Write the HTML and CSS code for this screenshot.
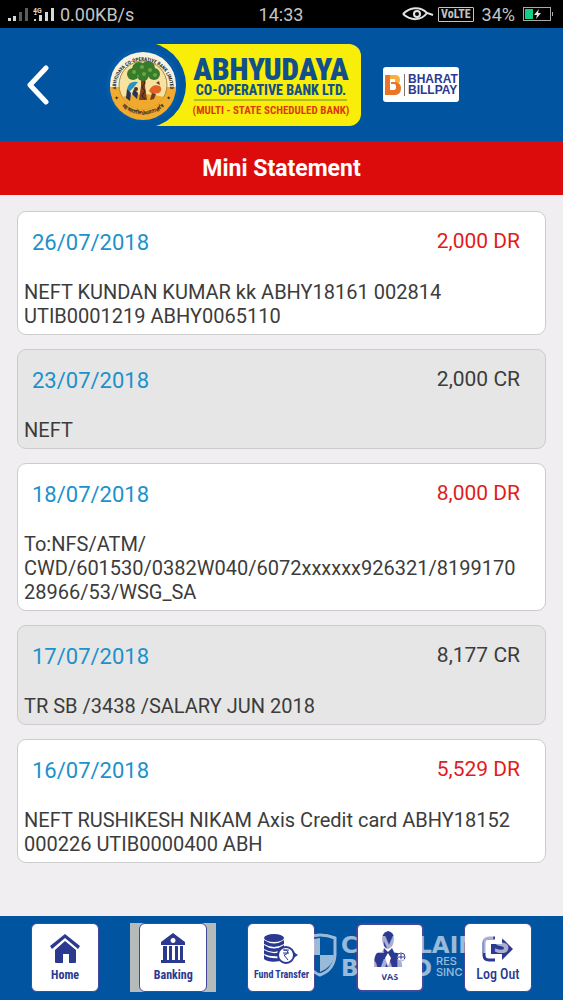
FILE: index.html
```html
<!DOCTYPE html>
<html lang="en">
<head>
    <meta charset="UTF-8">
    <meta name="viewport" content="width=device-width, initial-scale=1.0">
    <title>Mini Statement</title>
    <link rel="stylesheet" href="styles.css">
</head>
<body>
    <div class="app">
        <div class="status-bar">
            <div class="status-left">
                <svg class="signal" width="47" height="16" viewBox="0 0 47 16" aria-hidden="true">
                    <path d="M0 12h3v3H0zM5 10h3v5H5z" fill="#d8d8d8"/>
                    <path d="M11 6h3v9h-3zM17 2h3v13h-3z" fill="#5c5c5c"/>
                    <path d="M26 13h2v2h-2zM31 9h3v6h-3zM37 6h3v9h-3zM43 2h3v13h-3z" fill="#d8d8d8"/>
                    <path d="M26 9l1.500 -2 1.500 2z" fill="#d8d8d8"/>
                    <text x="25" y="7" class="net">4G</text>
                </svg>
                <span>0.00KB/s</span>
            </div>
            <span class="clock">14:33</span>
            <div class="status-right">
                <svg width="32" height="16" viewBox="0 0 32 16" fill="none" stroke="#e4e4e4" aria-hidden="true">
                    <path d="M1 8C8 1 18 0 25 7l6 2M1 8c8 7 18 7 24-1" stroke-width="2"/>
                    <circle cx="15" cy="8" r="3" stroke-width="2"/>
                </svg>
                <span class="volte">VoLTE</span>
                <span>34%</span>
                <svg width="31" height="14" viewBox="0 0 31 14" aria-hidden="true">
                    <rect x=".5" y=".5" width="27" height="13" fill="none" stroke="#aaa"/>
                    <path d="M2 2h8v10H2z" fill="#12cf86"/>
                    <path d="M29 5h1v4h-1z" fill="#aaa"/>
                    <path d="M16 2l-5 6h3l-1 4 5-6h-3z" fill="#e6e6e6"/>
                </svg>
            </div>
        </div>

        <header class="header">
            <button class="back" aria-label="Back">
                <svg width="24" height="40" viewBox="0 0 24 40"><path d="M20 3L4 20l16 17" fill="none" stroke="#fff" stroke-width="5" stroke-linecap="round" stroke-linejoin="round"/></svg>
            </button>

            <svg class="bank-logo" width="262" height="84" viewBox="0 0 262 84" role="img" aria-label="Abhyudaya Co-operative Bank Ltd.">
                <path d="M46 1h203a12 12 0 0 1 12 12v58a12 12 0 0 1-12 12H46z" fill="#f9ee0a"/>
                <circle cx="43" cy="42" r="43" fill="#0054a0"/>
                <circle cx="43" cy="42" r="37" fill="#045aa6"/>
                <circle cx="43" cy="42" r="33" fill="#f7f3df"/>
                <path d="M10 44a33 33 0 0 0 66 0z" fill="#f2ab2e"/>
                <circle cx="43" cy="42" r="24" fill="#f7e2a0" stroke="#a88a3c"/>
                <path d="M22 54a24 24 0 0 0 42 0q-21-6-42 0z" fill="#efa92c"/>
                <path d="M41 33h5l-1 10 2 14h-8l2-14z" fill="#80401d"/>
                <path d="M43 36l2 4-3 4 3 4-3 5 3 3" fill="none" stroke="#341e14"/>
                <g fill="#397b2c">
                    <circle cx="33" cy="31" r="6"/><circle cx="39" cy="26" r="7"/><circle cx="48" cy="25" r="7"/>
                    <circle cx="54" cy="31" r="6"/><circle cx="43" cy="32" r="6"/>
                </g>
                <g fill="#67a640">
                    <circle cx="34" cy="29" r="2"/><circle cx="42" cy="24" r="2"/><circle cx="50" cy="27" r="2"/><circle cx="44" cy="31" r="2"/><circle cx="55" cy="32" r="2"/><circle cx="38" cy="33" r="1"/>
                </g>
                <path d="M27 46q2-9 11-7l-4 5-5 5z" fill="#2494c8"/>
                <path d="M27 46l-1 9 4 3 1-8zM34 46l-2 5 5 5 1-6z" fill="#273353"/>
                <circle cx="36" cy="46" r="2" fill="#52301f"/>
                <path d="M49 48q3-8 11-5 3 4-1 7l-7 1z" fill="#df6425"/>
                <path d="M52 50l-2 7 4-1 2-5zM56 40l3-2 1 4z" fill="#703b21"/>
                <path id="ringTop" d="M17 52A27 27 0 1 1 69 52" fill="none"/>
                <path id="ringBottom" d="M18 59A31 31 0 0 0 68 59" fill="none"/>
                <text class="ring-text"><textPath href="#ringTop" startOffset="50%">ABHYUDAYA CO-OPERATIVE BANK LIMITED</textPath></text>
                <text class="ring-text" lang="hi"><textPath href="#ringBottom" startOffset="50%">सहकारातील प्रेमळता सर्वत्र</textPath></text>
                <text x="14" y="57" class="star">✦</text>
                <text x="66" y="57" class="star">✦</text>
                <text x="171" y="37" class="logo-name">ABHYUDAYA</text>
                <text x="171" y="52" class="logo-line">CO-OPERATIVE BANK LTD.</text>
                <path d="M94 57h153" stroke="#6b8a34"/>
                <text x="171" y="71" class="logo-state">(MULTI - STATE SCHEDULED BANK)</text>
            </svg>

            <div class="billpay">
                <svg width="18" height="22" viewBox="0 0 18 22" aria-hidden="true">
                    <path d="M5 1h6q5 0 5 5 0 3-2 4h-3V5H5z" fill="#f5b041"/>
                    <path d="M1 1h5v15h4q2 0 2-3t-2-3H7V8h4q6 1 6 6 0 7-6 7H1z" fill="#e87528"/>
                </svg>
                <span class="billpay-name">BHARAT<br>BILLPAY</span>
            </div>
        </header>

        <h1 class="title">Mini Statement</h1>

        <main>
            <ul class="statement">
                <li class="entry debit">
                    <div class="entry-head"><time datetime="2018-07-26">26/07/2018</time><span class="amount">2,000 DR</span></div>
                    <p>NEFT KUNDAN KUMAR kk ABHY18161 002814 UTIB0001219 ABHY0065110</p>
                </li>
                <li class="entry credit">
                    <div class="entry-head"><time datetime="2018-07-23">23/07/2018</time><span class="amount">2,000 CR</span></div>
                    <p>NEFT</p>
                </li>
                <li class="entry debit">
                    <div class="entry-head"><time datetime="2018-07-18">18/07/2018</time><span class="amount">8,000 DR</span></div>
                    <p>To:NFS/ATM/<br>CWD/601530/0382W040/6072xxxxxx926321/819917028966/53/WSG_SA</p>
                </li>
                <li class="entry credit">
                    <div class="entry-head"><time datetime="2018-07-17">17/07/2018</time><span class="amount">8,177 CR</span></div>
                    <p>TR SB /3438 /SALARY JUN 2018</p>
                </li>
                <li class="entry debit">
                    <div class="entry-head"><time datetime="2018-07-16">16/07/2018</time><span class="amount">5,529 DR</span></div>
                    <p>NEFT RUSHIKESH NIKAM Axis Credit card ABHY18152 000226 UTIB0000400 ABH</p>
                </li>
            </ul>
        </main>

        <nav class="tabs">
            <a href="#home" class="tab">
                <span class="tile">
                    <svg width="30" height="32" viewBox="0 0 30 32" fill="#2b3990" aria-hidden="true">
                        <path d="M15 1l15 12-2 3L15 5 2 16l-2-3z"/>
                        <path d="M15 8l11 9v12q0 1-1 1h-6v-9h-6v9H6q-1 0-1-1V17z"/>
                    </svg>
                    <span>Home</span>
                </span>
            </a>
            <a href="#banking" class="tab active">
                <span class="tile">
                    <svg width="26" height="32" viewBox="0 0 26 32" fill="#2b3990" aria-hidden="true">
                        <path fill-rule="evenodd" d="M13 0l12 9v3H1V9zM13 5a2.500 2.500 0 1 0 .1 0z"/>
                        <path d="M3 13h4v14H3zM9 13h3v14H9zM15 13h3v14h-3zM20 13h3v14h-3zM1 27h24v3H1z"/>
                    </svg>
                    <span>Banking</span>
                </span>
            </a>
            <a href="#transfer" class="tab">
                <span class="tile small">
                    <svg width="34" height="32" viewBox="0 0 34 32" fill="#2b3990" aria-hidden="true">
                        <ellipse cx="10" cy="5" rx="10" ry="4"/>
                        <path d="M0 7q10 7 20 0v4q-10 6-20 0zM0 12q10 7 20 0v4q-10 6-20 0zM0 17q10 6 18 1l-2 5q-10 1-16-2zM0 22q6 4 15 3l1 3Q5 30 0 26z"/>
                        <path d="M28 18l6 4-6 4z"/>
                        <circle cx="22" cy="22" r="8" fill="#fff" stroke="#2b3990" stroke-width="2"/>
                        <path d="M19 17h6M19 20h6M20 17q4 0 4 2t-4 3l4 5" fill="none" stroke="#2b3990"/>
                    </svg>
                    <span>Fund Transfer</span>
                </span>
            </a>
            <a href="#vas" class="tab">
                <span class="tile vas">
                    <svg width="34" height="36" viewBox="0 0 34 36" fill="#2b3990" aria-hidden="true">
                        <path d="M15 0q6 1 6 8-1 9-6 10-5-1-6-10Q9 2 15 0z"/>
                        <path d="M11 17l4 4 4-4 2 4q7 1 7 6l1 9H1q0-12 3-14l5-1z"/>
                        <path d="M15 22l3 5-3 8-3-8z" fill="#fff"/>
                        <circle cx="28" cy="26" r="4" fill="#fff" stroke="#2b3990"/>
                        <path d="M28 23v6M25 26h6" stroke="#2b3990" fill="none"/>
                    </svg>
                    <span>VAS</span>
                </span>
            </a>
            <a href="#logout" class="tab">
                <span class="tile logout">
                    <svg width="32" height="28" viewBox="0 0 32 28" fill="#2b3990" aria-hidden="true">
                        <path d="M13 3H7Q2 3 2 8v12q0 5 5 5h6" fill="none" stroke="#2b3990" stroke-width="3"/>
                        <path d="M9 9h11V3l11 11-11 11v-6H9z"/>
                    </svg>
                    <span>Log Out</span>
                </span>
            </a>
            <svg class="watermark" width="210" height="48" viewBox="0 0 210 48" fill="#fff" aria-hidden="true">
                <path d="M2 6Q16 0 31 6v17q-1 15-15 20Q3 38 2 23z" fill="none" stroke="#fff" stroke-width="3"/>
                <path d="M16 6v17H3V8zM16 23h14q-1 12-14 17z"/>
                <text x="37" y="21" class="wm-big">COMPLAINTS</text>
                <text x="37" y="44" class="wm-big">BOARD</text>
                <text x="132" y="33" class="wm-small">RES</text>
                <text x="132" y="44" class="wm-small">SINC</text>
            </svg>
        </nav>
    </div>
</body>
</html>
```
FILE: styles.css
```css
* {
    box-sizing: border-box;
}
body {
    margin: 0;
    font-family: Roboto, sans-serif;
    background: #f0eef1;
    color: #3c3c3c;
}
.app {
    min-height: 100vh;
    display: flex;
    flex-direction: column;
}
.status-bar {
    height: 28px;
    padding: 0 9px 0 8px;
    background: #000;
    color: #c4c4c4;
    font-size: 18px;
    display: grid;
    grid-template-columns: 1fr auto 1fr;
    align-items: center;
}
.status-left, .status-right {
    display: flex;
    align-items: center;
    gap: 5px;
}
.status-right {
    justify-content: flex-end;
    gap: 8px;
}
.net {
    font-size: 7px;
    font-weight: bold;
    fill: #d8d8d8;
}
.volte {
    border: 1px solid #c4c4c4;
    border-radius: 1px;
    padding: 0 2px;
    font-family: "Roboto Condensed", Roboto, sans-serif;
    font-size: 12px;
    line-height: 13px;
    font-weight: bold;
    margin-left: -4px;
}
.header {
    height: 113px;
    padding: 0 26px;
    background: #0054a0;
    display: flex;
    align-items: center;
}
.back {
    padding: 0;
    border: none;
    background: none;
    cursor: pointer;
    display: flex;
}
.bank-logo {
    margin-left: 50px;
}
.ring-text {
    font-family: "Roboto Condensed", Roboto, sans-serif;
    font-size: 5px;
    font-weight: bold;
    fill: #2c2a25;
    text-anchor: middle;
}
.star {
    font-family: "DejaVu Sans", sans-serif;
    font-size: 6px;
    fill: #2c2a25;
}
.logo-name, .logo-line, .logo-state {
    font-family: "Roboto Condensed", Roboto, sans-serif;
    font-weight: 700;
    text-anchor: middle;
    fill: #12508c;
}
.logo-name {
    font-size: 31px;
    font-weight: 900;
}
.logo-line {
    font-size: 14px;
    font-weight: 800;
}
.logo-state {
    font-size: 11px;
    fill: #dd3a14;
}
.billpay {
    margin-left: 21px;
    height: 35px;
    padding: 0 1px;
    border-radius: 3px;
    background: #fff;
    display: flex;
    align-items: center;
    gap: 2px;
}
.billpay-name {
    padding-left: 3px;
    border-left: 1px solid #777;
    color: #2b3990;
    font-family: "Liberation Sans", Arial, sans-serif;
    font-size: 12px;
    line-height: 11px;
    font-weight: bold;
}
.title {
    margin: 0;
    padding-top: 2px;
    background: #dc0c0c;
    color: #fff;
    font-size: 23px;
    line-height: 52px;
    font-weight: 700;
    text-align: center;
}
main {
    flex: 1;
    padding: 16px 17px;
}
.statement {
    list-style: none;
    margin: 0;
    padding: 0;
    display: flex;
    flex-direction: column;
    gap: 14px;
}
.entry {
    border: 1px solid #ccc;
    border-radius: 9px;
    padding: 0 7px 6px 6px;
    background: #fff;
}
.entry.credit {
    background: #e6e6e6;
}
.entry-head {
    height: 68px;
    padding: 17px 18px 0 8px;
    display: flex;
    justify-content: space-between;
}
.entry-head time {
    color: #1c91cc;
    font-size: 22px;
    line-height: 28px;
}
.amount {
    font-size: 21px;
    line-height: 24px;
}
.debit .amount {
    color: #e21b1b;
}
.entry p {
    margin: 0;
    padding-right: 12px;
    font-size: 20px;
    line-height: 24px;
    overflow-wrap: anywhere;
}
.tabs {
    position: relative;
    height: 84px;
    padding: 7px 11px 8px 11px;
    background: #0054a0;
    display: grid;
    grid-template-columns: repeat(5, 1fr);
    justify-items: center;
}
.tab {
    width: 86px;
    display: flex;
    justify-content: center;
    text-decoration: none;
    color: #2b3990;
}
.tab.active {
    background: #b5babb;
}
.tile {
    width: 68px;
    border: 1px solid #44489a;
    border-radius: 6px;
    background: #fff;
    display: flex;
    flex-direction: column;
    align-items: center;
    justify-content: center;
    gap: 3px;
    font-family: "Roboto Condensed", Roboto, sans-serif;
    font-size: 12px;
    line-height: 14px;
    font-weight: bold;
}
.tile.small {
    font-size: 10px;
}
.tile.vas {
    border-width: 2px;
    font-family: "Open Sans", sans-serif;
    font-size: 9px;
}
.tile.logout {
    gap: 4px;
    font-size: 14px;
    font-weight: 500;
}
.watermark {
    position: absolute;
    left: 304px;
    top: 16px;
    opacity: 0.6;
    pointer-events: none;
}
.wm-big {
    font-family: "DejaVu Sans", sans-serif;
    font-size: 23px;
    font-weight: bold;
}
.wm-small {
    font-family: Inter, sans-serif;
    font-size: 11px;
    font-weight: 500;
}
```
